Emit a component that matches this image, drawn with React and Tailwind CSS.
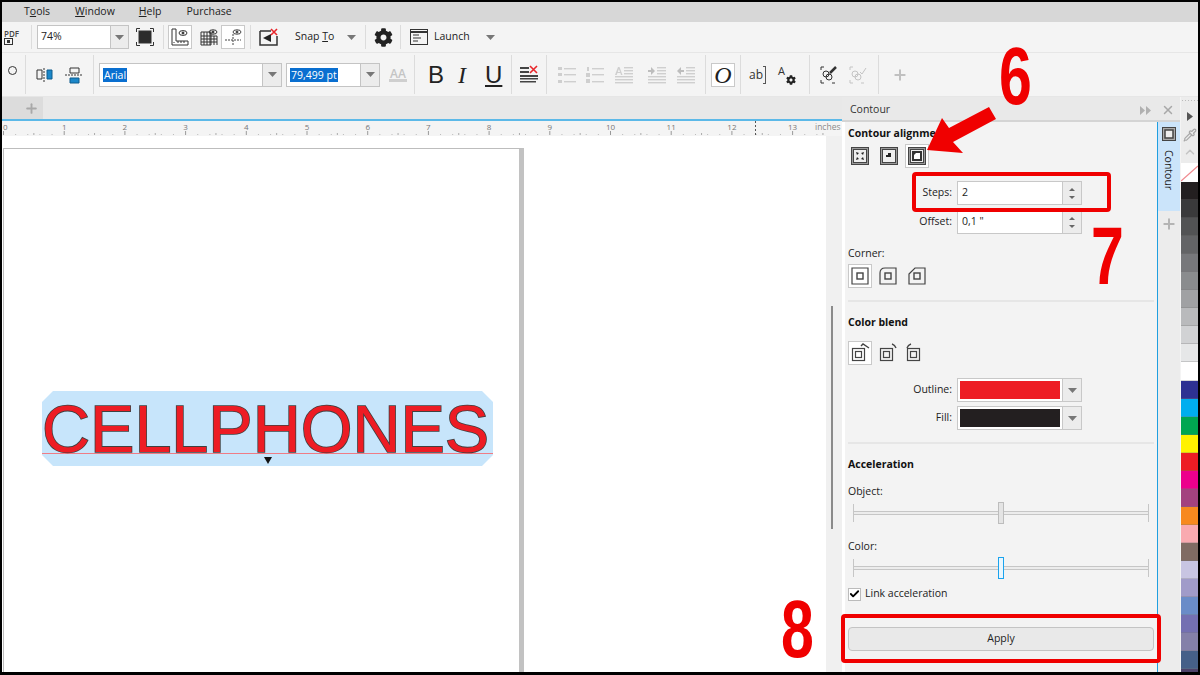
import React from "react";
import { Check, Plus, X, Pipette, ChevronUp } from "lucide-react";
import { FaCog } from "react-icons/fa";

const swatches = ["#231f20", "#3a3a3b", "#525354", "#636466", "#77787b", "#8a8c8e", "#a0a1a3", "#b9babc", "#d1d2d4", "#e6e7e8", "#ffffff", "#2e3192", "#00aeef", "#00a651", "#fff200", "#ed1c24", "#ec008c", "#a3427f", "#f7891f", "#f9aab0", "#806b63", "#c8c5e2", "#a09bc9", "#6a8cc8", "#7470b2", "#8480a9", "#466088", "#4e4269"];

function Sep({ className }) {
  return <div className={"w-px self-stretch bg-[#dcdcdc] " + (className || "")} />;
}

function Caret({ className }) {
  return (
    <svg width="9" height="5" viewBox="0 0 9 5" className={className}>
      <path d="M0 0h9L4.500 5z" fill="#777" />
    </svg>
  );
}

function Combo({ children, className, caretWidth = "w-[18px]" }) {
  return (
    <div className={"flex h-[24px] border border-[#c4c4c4] bg-white " + className}>
      <div className="flex flex-1 items-center overflow-hidden pl-[3px] text-[10.500px] text-[#222]">{children}</div>
      <div className={"flex items-center justify-center border-l border-[#c4c4c4] bg-[#ececec] " + caretWidth}>
        <Caret />
      </div>
    </div>
  );
}

function Sel({ children }) {
  return <span className="bg-[#0a6fd0] px-px leading-[14px] text-white">{children}</span>;
}

function ToggleBox({ children, className }) {
  return <div className={"flex h-[24px] w-[24px] items-center justify-center border border-[#c9c9c9] bg-white " + (className || "")}>{children}</div>;
}

function Nested({ inner, size = 18 }) {
  return (
    <svg width={size} height={size} viewBox="0 0 18 18">
      <rect x="0.5" y="0.5" width="17" height="17" fill="#999" stroke="#444" />
      <rect x="2.500" y="2.500" width="13" height="13" fill="#eee" stroke="#444" />
      {inner}
    </svg>
  );
}

function CornerIcon({ d }) {
  return (
    <svg width="18" height="18" viewBox="0 0 18 18" fill="none" stroke="#444" strokeWidth="1.200">
      <path d={d} />
      <rect x="6" y="6" width="6" height="6" strokeWidth="1.400" />
    </svg>
  );
}

function BlendIcon({ arc }) {
  return (
    <svg width="20" height="20" viewBox="0 0 20 20" fill="none" stroke="#444">
      <rect x="2.500" y="5.500" width="12" height="12" strokeWidth="1.200" />
      <rect x="5.500" y="8.500" width="6" height="6" strokeWidth="1.200" />
      <path d={arc} strokeWidth="1.400" />
    </svg>
  );
}

function ListIcon({ kind }) {
  const c = "#cfcfcf";
  if (kind === "bullet" || kind === "number") {
    return (
      <svg width="18" height="18" viewBox="0 0 18 18" fill={c}>
        {kind === "bullet" ? (
          <>
            <rect x="0" y="1" width="4" height="3" />
            <rect x="0" y="7" width="4" height="3" />
            <rect x="0" y="14" width="4" height="3" />
          </>
        ) : (
          <>
            <rect x="1" y="1" width="2" height="4" />
            <rect x="0" y="7" width="4" height="4" />
            <rect x="0" y="13" width="4" height="4" />
          </>
        )}
        <rect x="6" y="2" width="12" height="1.400" />
        <rect x="6" y="8" width="12" height="1.400" />
        <rect x="6" y="15" width="12" height="1.400" />
      </svg>
    );
  }
  return (
    <svg width="18" height="18" viewBox="0 0 18 18" fill={c}>
      {kind === "letter" && <path d="M0 9 3 1h1.500l3 8H6L5.400 7H2.400l-.7 2zM2.800 6h2.200L3.900 3z" />}
      {kind === "in" && <path d="M0 4h3V1l4 4-4 4V6H0z" fill="#bdbdbd" />}
      {kind === "out" && <path d="M7 4H4V1L0 5l4 4V6h3z" fill="#bdbdbd" />}
      <rect x="9" y="1" width="9" height="1.400" />
      <rect x="9" y="4" width="9" height="1.400" />
      <rect x="9" y="7" width="9" height="1.400" />
      <rect x="0" y="10" width="18" height="1.400" />
      <rect x="0" y="13" width="18" height="1.400" />
      <rect x="0" y="16" width="18" height="1.400" />
    </svg>
  );
}

function Ruler() {
  const ticks = [];
  for (let i = 0; i < 136; i++) {
    const x = 1 + i * 6.07;
    if (i % 10 === 0) ticks.push(<rect key={i} x={x} y="10" width="1" height="4" fill="#999" />);
    else if (i % 5 === 0) ticks.push(<rect key={i} x={x} y="12" width="1" height="2" fill="#aaa" />);
    else if (i % 2 === 0) ticks.push(<rect key={i} x={x} y="13" width="1" height="1" fill="#bbb" />);
  }
  const nums = [];
  for (let n = 0; n <= 13; n++) {
    nums.push(
      <text key={n} x={(n === 0 ? 1 : 1.500) + n * 60.700} y="9" fontSize="8" fill="#777" textAnchor={n === 0 ? "start" : "middle"} fontFamily="Open Sans, sans-serif">
        {n}
      </text>
    );
  }
  return (
    <svg width="840" height="15" viewBox="0 0 840 15" className="block bg-[#f4f4f4]">
      {ticks}
      {nums}
      <text x="813" y="9" fontSize="8.500" fill="#8a8a8a" fontFamily="Open Sans, sans-serif">inches</text>
      <path d="M753.500 0v15" stroke="#555" strokeDasharray="2 2" />
    </svg>
  );
}

function Slider({ active }) {
  return (
    <div className="relative ml-[5px] flex h-[22px] w-[296px] items-center">
      <div className="h-[4px] w-full border-y border-[#c6c6c6] bg-[#ececec]" />
      <div className="absolute left-0 top-[2px] h-[18px] w-px bg-[#c6c6c6]" />
      <div className="absolute right-0 top-[2px] h-[18px] w-px bg-[#c6c6c6]" />
      <div className={"absolute left-[145px] top-0 h-[22px] w-[6px] border " + (active ? "border-[#1aa3ee] bg-[#eaf6fd]" : "border-[#bdbdbd] bg-[#e4e4e4]")} />
    </div>
  );
}

function Spin({ value, label }) {
  return (
    <div className="flex h-[24px] items-center">
      <div className="w-[109px] pr-[5px] text-right">{label}</div>
      <div className="flex h-[24px] w-[125px] border border-[#c8c8c8] bg-white">
        <div className="flex flex-1 items-center pl-[4px]">{value}</div>
        <div className="flex w-[19px] flex-col items-center justify-center gap-[5px] border-l border-[#c8c8c8] bg-[#ececec]">
          <svg width="6" height="3" viewBox="0 0 6 3"><path d="M0 3h6L3 0z" fill="#666" /></svg>
          <svg width="6" height="3" viewBox="0 0 6 3"><path d="M0 0h6L3 3z" fill="#666" /></svg>
        </div>
      </div>
    </div>
  );
}

function ColorCombo({ label, color }) {
  return (
    <div className="flex h-[24px] items-center">
      <div className="w-[109px] pr-[5px] text-right">{label}</div>
      <div className="flex h-[24px] w-[125px] border border-[#c8c8c8] bg-white">
        <div className="flex flex-1 p-[2px]">
          <div className={"flex-1 " + color} />
        </div>
        <div className="flex w-[19px] items-center justify-center border-l border-[#c8c8c8] bg-[#ececec]">
          <Caret />
        </div>
      </div>
    </div>
  );
}

function Divider() {
  return <div className="h-[2px] w-[306px] bg-[#e6e6e6]" />;
}

function Menu() {
  return (
    <div className="flex h-[20px] items-center bg-[#d7d7d7] pl-[22px] text-[10.500px] text-[#222]">
      <span>T<u>o</u>ols</span>
      <span className="ml-[25px]"><u>W</u>indow</span>
      <span className="ml-[24px]"><u>H</u>elp</span>
      <span className="ml-[25px]">Purchase</span>
    </div>
  );
}

function TopBar() {
  return (
    <div className="flex h-[30px] items-center bg-[#f4f4f4] py-[3px] text-[10.500px] text-[#222]">
      <div className="ml-[2px] w-[20px] text-[8px] font-semibold leading-[8px] text-[#444]">
        PDF
        <svg width="9" height="7" viewBox="0 0 9 7" className="block"><rect x="0.5" y="0.5" width="8" height="6" fill="none" stroke="#333" /><rect x="3" y="2" width="3" height="3" fill="#333" /></svg>
      </div>
      <Sep className="ml-[7px]" />
      <Combo className="ml-[5px] w-[92px]">74%</Combo>
      <svg width="18" height="18" viewBox="0 0 18 18" className="ml-[7px]" fill="none" stroke="#333">
        <path d="M.5 4V.5H4M14 .5h3.500V4M17.500 14v3.500H14M4 17.500H.5V14" />
        <rect x="3" y="3" width="12" height="12" fill="#2b2b2b" />
      </svg>
      <Sep className="ml-[9px]" />
      <ToggleBox className="ml-[4px]">
        <svg width="18" height="18" viewBox="0 0 18 18" fill="none" stroke="#333"><path d="M1 1h4v12h12v4H1z" /><path d="M3 15v-1M7 15v-2M10 15v-2M13 15v-2" /><ellipse cx="12" cy="5" rx="4" ry="2.400" /><circle cx="12" cy="5" r="1" fill="#333" /></svg>
      </ToggleBox>
      <svg width="18" height="18" viewBox="0 0 18 18" className="ml-[8px]" fill="none" stroke="#333"><path d="M1 4h10v13H1zM1 8h16M1 11h16M1 14h16M4 4v13M7 4v13M10 4v13M14 8v9M17 8v9" /><ellipse cx="13" cy="4" rx="4" ry="2.200" /><circle cx="13" cy="4" r="1" fill="#333" /></svg>
      <ToggleBox className="ml-[3px]">
        <svg width="18" height="18" viewBox="0 0 18 18" fill="none" stroke="#444"><path d="M9 6v11M1 12h16" strokeDasharray="2 1" /><ellipse cx="13" cy="4" rx="4" ry="2.200" /><circle cx="13" cy="4" r="1" fill="#333" /></svg>
      </ToggleBox>
      <Sep className="ml-[5px]" />
      <svg width="19" height="19" viewBox="0 0 19 19" className="ml-[8px]" fill="none"><path d="M1 3h11M1 3v14h17V8" stroke="#333" strokeWidth="1.500" /><path d="M4 10l8-4v8z" fill="#222" /><path d="M12 1l6 6M18 1l-6 6" stroke="#e8262b" strokeWidth="1.600" /></svg>
      <span className="ml-[16px] w-[42px] whitespace-nowrap pl-px">Snap <u>T</u>o</span>
      <Caret className="ml-[11px]" />
      <Sep className="ml-[9px]" />
      <FaCog size={19} className="ml-[8px] text-[#222]" />
      <Sep className="ml-[7px]" />
      <svg width="18" height="18" viewBox="0 0 18 18" className="ml-[9px]" fill="none" stroke="#333"><rect x=".5" y="1.500" width="17" height="15" /><path d="M.5 4h17" strokeWidth="2" /><path d="M3 7h6M3 10h8M3 13h5" /></svg>
      <span className="ml-[6px] w-[36px]">Launch</span>
      <Caret className="ml-[16px]" />
    </div>
  );
}

function FormatBar() {
  return (
    <div className="flex h-[45px] items-center border-y border-[#e6e6e6] bg-[#f4f4f4] py-[2px] text-[11.500px]">
      <div className="mb-[8px] ml-[6px] h-[9px] w-[9px] rounded-full border border-[#333]" />
      <Sep className="ml-[8px]" />
      <svg width="18" height="16" viewBox="0 0 18 16" className="ml-[10px]" fill="none"><path d="M1 3h5v9H1z" stroke="#333" /><path d="M8 1v14" stroke="#333" strokeDasharray="2 1" /><path d="M11 3h5v9h-5z" fill="#1b87c9" stroke="#0f5c8e" /></svg>
      <svg width="18" height="18" viewBox="0 0 18 18" className="ml-[11px]" fill="none"><path d="M5 2h9v5H5z" stroke="#333" /><path d="M0 9h18" stroke="#333" strokeDasharray="2 1" /><path d="M5 12h9v5H5z" fill="#1b87c9" stroke="#0f5c8e" /></svg>
      <Sep className="ml-[10px]" />
      <Combo className="ml-[5px] w-[183px]" caretWidth="w-[19px]"><Sel>Arial</Sel></Combo>
      <Combo className="ml-[4px] w-[94px]" caretWidth="w-[19px]"><Sel>79,499 pt</Sel></Combo>
      <div className="ml-[8px] flex w-[20px] flex-col items-center text-[12px] font-semibold leading-[11px] text-[#c4c4c4]">
        AA
        <div className="h-[3px] w-[18px] bg-[#cfcfcf]" />
      </div>
      <Sep className="ml-[6px]" />
      <span className="ml-[13px] w-[16px] font-['Liberation_Sans',sans-serif] text-[24px] text-[#222]">B</span>
      <span className="ml-[14px] w-[10px] font-['Liberation_Serif',serif] text-[24px] italic text-[#222]">I</span>
      <span className="ml-[17px] w-[17px] font-['Liberation_Sans',sans-serif] text-[24px] leading-[28px] text-[#222] underline decoration-2 underline-offset-2">U</span>
      <Sep className="ml-[9px]" />
      <svg width="20" height="20" viewBox="0 0 20 20" className="ml-[8px]"><path d="M0 2h9v2H0zM0 6h9v2H0zM0 10h18v2H0zM0 13h18v1.500H0zM0 16h16v1.500H0z" fill="#444" /><path d="M10 1l7 7M17 1l-7 7" stroke="#e8262b" strokeWidth="1.600" /></svg>
      <Sep className="ml-[6px]" />
      <div className="ml-[11px]"><ListIcon kind="bullet" /></div>
      <div className="ml-[10px]"><ListIcon kind="number" /></div>
      <div className="ml-[11px]"><ListIcon kind="letter" /></div>
      <div className="ml-[15px]"><ListIcon kind="in" /></div>
      <div className="ml-[11px]"><ListIcon kind="out" /></div>
      <Sep className="ml-[10px]" />
      <ToggleBox className="ml-[5px] font-['Liberation_Serif',serif] text-[24px] italic text-[#222]">O</ToggleBox>
      <Sep className="ml-[5px]" />
      <div className="ml-[8px] flex w-[18px] items-center text-[12px] text-[#333]">
        ab
        <div className="h-[18px] w-[3px] border-y border-r border-[#555]" />
      </div>
      <div className="ml-[11px] flex h-[22px] w-[19px] text-[11px] leading-[14px] text-[#333]">
        <span>A</span>
        <FaCog size={10} className="mt-[11px] ml-px text-[#222]" />
      </div>
      <Sep className="ml-[12px]" />
      <svg width="18" height="18" viewBox="0 0 18 18" className="ml-[10px]" fill="none" stroke="#333"><path d="M1 4V1h3M1 14v3h3M12 17h3" /><circle cx="6" cy="8" r="3" /><circle cx="9" cy="11" r="3" /><path d="M10 7l6-6" strokeWidth="2.500" /></svg>
      <svg width="18" height="18" viewBox="0 0 18 18" className="ml-[11px]" fill="none" stroke="#c4c4c4"><path d="M1 4V1h3M1 14v3h3M12 17h3" /><circle cx="6" cy="8" r="3" /><circle cx="9" cy="11" r="3" /><path d="M11 6l2 2 4-6" /></svg>
      <Sep className="ml-[11px]" />
      <Plus size={16} strokeWidth={3} className="ml-[13px] text-[#c0c0c0]" />
    </div>
  );
}

function Canvas() {
  return (
    <div className="flex w-[840px] flex-col">
      <div className="flex h-[22px] bg-[#e8e8e8]">
        <div className="flex w-[41px] items-center justify-end bg-[#dcdcdc] pr-[4px]">
          <Plus size={15} strokeWidth={3} className="text-[#a8a8a8]" />
        </div>
      </div>
      <div className="h-[2px] w-full bg-[#5cb9e8]" />
      <Ruler />
      <div className="flex flex-1 bg-white">
        <div className="flex w-[824px] pt-[12px]">
          <div className="relative ml-px h-full w-[521px] border-l border-t border-[#bdbdbd] border-r-[5px] border-r-[#c2c2c2]">
            {/* selected text on the page */}
            <div className="absolute left-[38px] top-[242px] h-[75px] w-[451px] bg-[#c7e5fb] [clip-path:polygon(11px_0,440px_0,451px_11px,451px_64px,440px_75px,11px_75px,0_64px,0_11px)]">
              <div className="absolute left-0 top-[62px] h-px w-full bg-[#ef7c85]" />
              <div className="absolute left-0 top-[-2px] whitespace-nowrap font-['Liberation_Sans',sans-serif] text-[66.500px] leading-[80px] text-[#ed1c24] [-webkit-text-stroke:1.600px_#404040] [paint-order:stroke_fill]">CELLPHONES</div>
              <svg width="8" height="7" viewBox="0 0 8 7" className="absolute left-[222px] top-[66px]"><path d="M0 0h8L4 7z" fill="#111" /></svg>
            </div>
          </div>
        </div>
        <div className="flex flex-1 bg-[#f0f0f0] pl-[5px] pt-[170px]">
          <div className="h-[223px] w-[2px] bg-[#8a8a8a]" />
        </div>
      </div>
    </div>
  );
}

function Docker() {
  return (
    <div className="flex flex-1 flex-col">
      <div className="flex h-[25px] items-center border-b-2 border-[#d4d4d4] bg-[#e9e9e9] pl-[8px] pt-[3px] text-[10.500px] text-[#333]">
        <span className="flex-1">Contour</span>
        <svg width="12" height="9" viewBox="0 0 12 9" className="mr-[9px]"><path d="M0 0l5 4.500L0 9zM6 0l5 4.500L6 9z" fill="#b0b0b0" /></svg>
        <X size={14} strokeWidth={2.500} className="mr-[5px] text-[#a8a8a8]" />
      </div>
      <div className="flex flex-1">
        <div className="flex w-[316px] flex-col border-r border-[#1f9fe0] border-l-[3px] border-l-white bg-[#f3f3f3] pl-[3px] text-[10.500px] text-[#222]">
          <div className="mt-[3px] h-[16px] font-bold leading-[16px] text-[#111]">Contour alignment</div>
          <div className="mt-[3px] flex h-[24px] items-center">
            <div className="ml-[3px]"><Nested inner={<path d="M5 5l3 1-2 2zM13 5l-1 3-2-2zM5 13l1-3 2 2zM13 13l-3-1 2-2z" fill="#222" />} /></div>
            <div className="ml-[11px]"><Nested inner={<path d="M6 10V8h2V6h3v4z" fill="#222" />} /></div>
            <ToggleBox className="ml-[7px]">
              <Nested
                inner={
                  <>
                    <rect x="4" y="4" width="10" height="10" fill="#333" />
                    <path d="M6 12V8l2-2h4v6z" fill="#fff" />
                  </>
                }
              />
            </ToggleBox>
          </div>
          <div className="mt-[13px]"><Spin label="Steps:" value="2" /></div>
          <div className="mt-[5px]"><Spin label="Offset:" value={'0,1 "'} /></div>
          <div className="mt-[11px] h-[16px] leading-[16px]">Corner:</div>
          <div className="mt-[3px] flex h-[24px] items-center">
            <ToggleBox><CornerIcon d="M1 1h16v16H1z" /></ToggleBox>
            <div className="ml-[7px] flex"><CornerIcon d="M1 6q0-5 5-5h11v16H1z" /></div>
            <div className="ml-[11px] flex"><CornerIcon d="M1 7l6-6h10v16H1z" /></div>
          </div>
          <div className="mt-[12px]"><Divider /></div>
          <div className="mt-[12px] h-[16px] font-bold leading-[16px] text-[#111]">Color blend</div>
          <div className="mt-[11px] flex h-[24px] items-center">
            <ToggleBox><BlendIcon arc="M11 3l2-2 6 4" /></ToggleBox>
            <div className="ml-[6px] flex"><BlendIcon arc="M14 1q3 1 4 4" /></div>
            <div className="ml-[7px] flex"><BlendIcon arc="M6 1q-3 1-4 4" /></div>
          </div>
          <div className="mt-[13px]"><ColorCombo label="Outline:" color="bg-[#ed1c24]" /></div>
          <div className="mt-[4px]"><ColorCombo label="Fill:" color="bg-[#231f20]" /></div>
          <div className="mt-[12px]"><Divider /></div>
          <div className="mt-[12px] h-[16px] font-bold leading-[16px] text-[#111]">Acceleration</div>
          <div className="mt-[11px] h-[16px] leading-[16px]">Object:</div>
          <div className="mt-[3px]"><Slider /></div>
          <div className="mt-[14px] h-[16px] leading-[16px]">Color:</div>
          <div className="mt-[3px]"><Slider active /></div>
          <div className="mt-[7px] flex h-[16px] items-center">
            <div className="flex h-[13px] w-[13px] items-center justify-center border border-[#bbb] bg-white">
              <Check size={12} strokeWidth={4} className="text-black" />
            </div>
            <span className="ml-[4px]">Link acceleration</span>
          </div>
          <div className="mt-[25px] flex h-[24px] w-[306px] items-center justify-center rounded-[4px] border border-[#c4c4c4] bg-[#e9e9e9]">Apply</div>
        </div>
        <div className="flex w-[22px] flex-col items-center bg-[#ececec]">
          <div className="flex h-[89px] w-full flex-col items-center bg-[#cbe4fa] pt-[5px]">
            <svg width="14" height="14" viewBox="0 0 14 14" fill="none" stroke="#444"><rect x=".5" y=".5" width="13" height="13" fill="#aaa" /><rect x="3" y="3" width="8" height="8" fill="#eee" strokeWidth="1.500" /></svg>
            <span className="mt-[9px] text-[10.500px] leading-[14px] text-[#222] [writing-mode:vertical-rl]">Contour</span>
          </div>
          <Plus size={16} strokeWidth={3} className="mt-[5px] text-[#b4b4b4]" />
        </div>
      </div>
    </div>
  );
}

function Palette() {
  return (
    <div className="ml-px flex w-[17px] flex-col items-center overflow-hidden bg-[#ececec]">
      <div className="mt-[2px] h-[3px] w-full shrink-0 [background-image:radial-gradient(#bbb_1px,transparent_1px)] [background-size:3px_3px]" />
      <svg width="6" height="9" viewBox="0 0 6 9" className="mt-[10px] shrink-0"><path d="M0 0l6 4.500L0 9z" fill="#555" /></svg>
      <Pipette size={14} className="mt-[7px] shrink-0 text-[#a8a8a8]" />
      <ChevronUp size={14} strokeWidth={2.500} className="mt-[3px] shrink-0 text-[#c4c4c4]" />
      <svg width="17" height="19" viewBox="0 0 17 19" className="mt-[4px] block shrink-0"><rect width="17" height="19" fill="#fff" /><path d="M0 18L17 3" stroke="#f08a8f" strokeWidth="1.300" /></svg>
      <div className="flex w-full shrink-0 flex-col">
        {swatches.map((c) => (
          <div key={c} className="h-[18.050px] shrink-0 border-b border-[#777]/30" style={{ background: c }} />
        ))}
      </div>
    </div>
  );
}

function Notes() {
  const num = "absolute font-['Liberation_Sans',sans-serif] font-bold text-[82px] leading-[82px] text-[#f00000] scale-x-[0.72] origin-left";
  return (
    <>
      <div className={num + " left-[999px] top-[35px]"}>6</div>
      <div className={num + " left-[1091px] top-[215px]"}>7</div>
      <div className={num + " left-[781px] top-[588px]"}>8</div>
      <svg width="80" height="60" viewBox="0 0 80 60" className="absolute left-[925px] top-[100px]">
        <path d="M2 50L17 18l7 10L64 7l7 12-43 23 10 11z" fill="#f00000" />
      </svg>
      <div className="absolute left-[912px] top-[172px] h-[40px] w-[199px] rounded-[4px] border-4 border-[#f00000]" />
      <div className="absolute left-[841px] top-[614px] h-[49px] w-[320px] rounded-[4px] border-4 border-[#f00000]" />
    </>
  );
}

export default function App() {
  return (
    <div className="relative h-[675px] w-[1200px] overflow-hidden bg-black pb-[3px] pl-[2px] pr-[2px] pt-[2px] font-['Open_Sans',sans-serif]">
      <div className="flex h-full w-full flex-col bg-[#f4f4f4]">
        <Menu />
        <TopBar />
        <FormatBar />
        <div className="flex flex-1 overflow-hidden">
          <Canvas />
          <Docker />
          <Palette />
        </div>
      </div>
      <Notes />
    </div>
  );
}
